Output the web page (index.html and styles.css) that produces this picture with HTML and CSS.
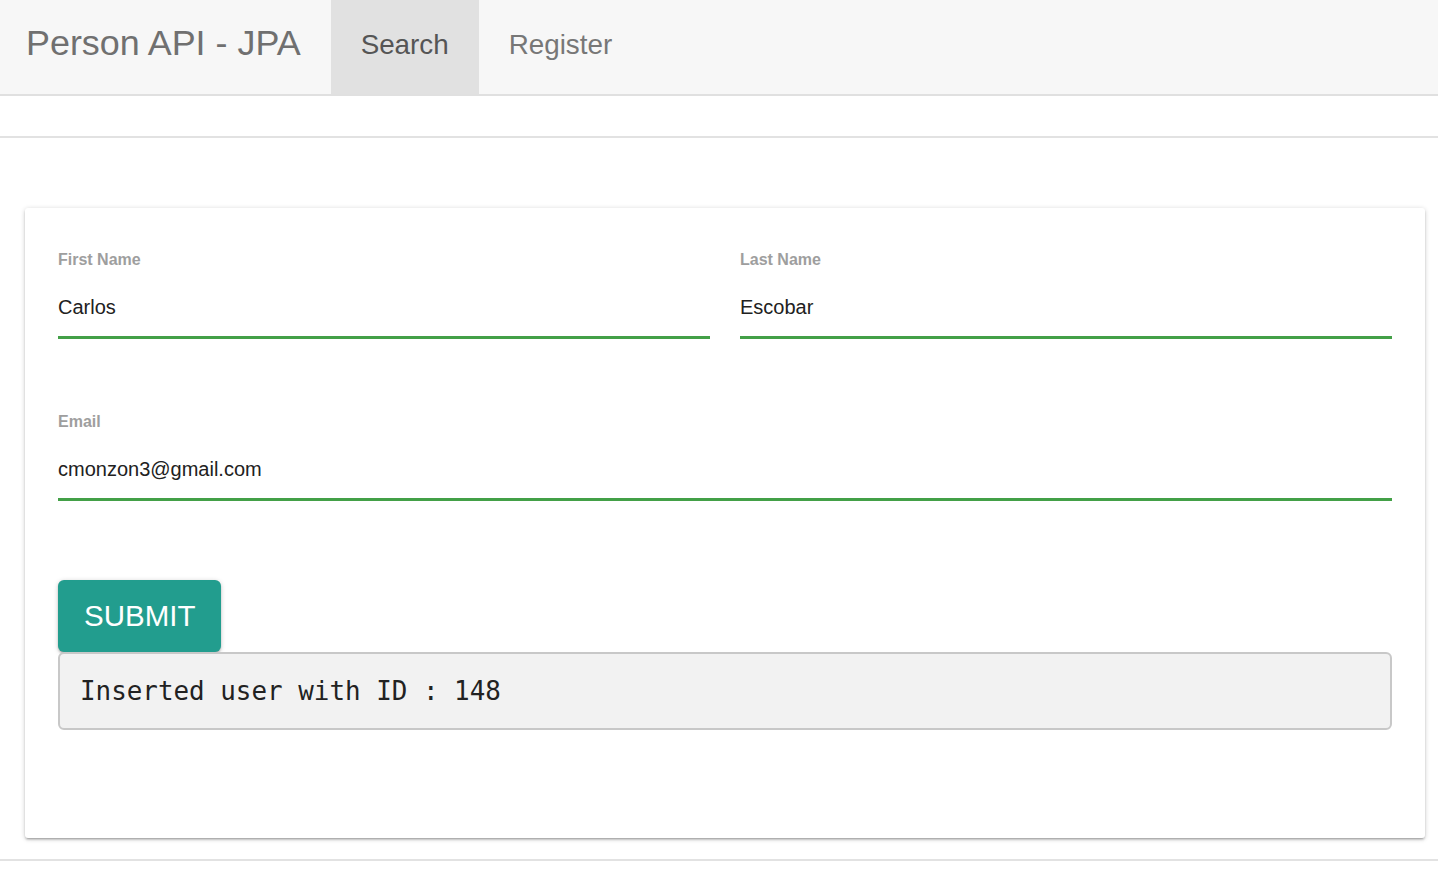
FILE: index.html
```html
<!DOCTYPE html>
<html lang="en">
<head>
<meta charset="utf-8">
<title>Person API - JPA</title>
<link rel="stylesheet" href="styles.css">
</head>
<body>
<nav class="navbar">
  <a class="brand">Person API - JPA</a>
  <ul class="nav">
    <li class="nav-item active">Search</li>
    <li class="nav-item">Register</li>
  </ul>
</nav>
<hr class="rule rule-top">
<main class="card">
  <div class="row">
    <div class="field">
      <label class="label">First Name</label>
      <div class="value">Carlos</div>
    </div>
    <div class="field">
      <label class="label">Last Name</label>
      <div class="value">Escobar</div>
    </div>
  </div>
  <div class="row row-email">
    <div class="field">
      <label class="label">Email</label>
      <div class="value">cmonzon3@gmail.com</div>
    </div>
  </div>
  <button class="submit">SUBMIT</button>
  <pre class="result">Inserted user with ID : 148</pre>
</main>
<hr class="rule rule-bottom">
</body>
</html>
```
FILE: styles.css
```css
html, body {
  margin: 0;
  padding: 0;
  background: #ffffff;
  font-family: "Liberation Sans", Arial, sans-serif;
}

.navbar {
  display: flex;
  align-items: stretch;
  height: 94px;
  background: #f7f7f7;
  border-bottom: 2px solid #e0e0e0;
}

.brand {
  display: flex;
  align-items: center;
  padding: 0 30px 7px 26px;
  font-size: 35.9px;
  color: #707070;
}

.nav {
  display: flex;
  margin: 0;
  padding: 0;
  list-style: none;
}

.nav-item {
  display: flex;
  align-items: center;
  padding: 0 30px 5px 30px;
  font-size: 27.8px;
  color: #777777;
}

.nav-item.active {
  background: #e1e1e1;
  color: #555555;
}

.rule {
  border: 0;
  height: 2px;
  background: #e2e2e2;
  margin: 0;
}

.rule-top {
  margin-top: 40px;
}

.rule-bottom {
  margin-top: 21px;
}

.card {
  display: block;
  margin: 70px 13px 0 25px;
  padding: 42px 33px 108px 33px;
  background: #ffffff;
  border-radius: 3px;
  box-shadow: 0 2px 2px 0 rgba(0, 0, 0, 0.14), 0 3px 1px -2px rgba(0, 0, 0, 0.12), 0 1px 5px 0 rgba(0, 0, 0, 0.2);
}

.row {
  display: flex;
  gap: 30px;
}

.row-email {
  margin-top: 73px;
}

.field {
  flex: 1;
  min-width: 0;
}

.label {
  display: block;
  font-size: 16px;
  line-height: 20px;
  font-weight: bold;
  color: #9e9e9e;
}

.value {
  margin-top: 23px;
  font-size: 20px;
  line-height: 28px;
  color: #212121;
  padding-bottom: 15px;
  border-bottom: 3px solid #43a047;
}

.submit {
  display: block;
  margin-top: 79px;
  height: 72px;
  padding: 0 26px;
  border: 0;
  border-radius: 6px;
  background: #229d8e;
  color: #ffffff;
  font-family: "Liberation Sans", Arial, sans-serif;
  font-size: 29.5px;
  box-shadow: 0 2px 2px 0 rgba(0, 0, 0, 0.14), 0 3px 1px -2px rgba(0, 0, 0, 0.12), 0 1px 5px 0 rgba(0, 0, 0, 0.2);
}

.result {
  margin: 0;
  box-sizing: border-box;
  height: 78px;
  padding: 0 20px;
  display: flex;
  align-items: center;
  background: #f2f2f2;
  border: 2px solid #c8c8c8;
  border-radius: 6px;
  font-family: "DejaVu Sans Mono", "Liberation Mono", monospace;
  font-size: 25.9px;
  color: #222222;
}
```
